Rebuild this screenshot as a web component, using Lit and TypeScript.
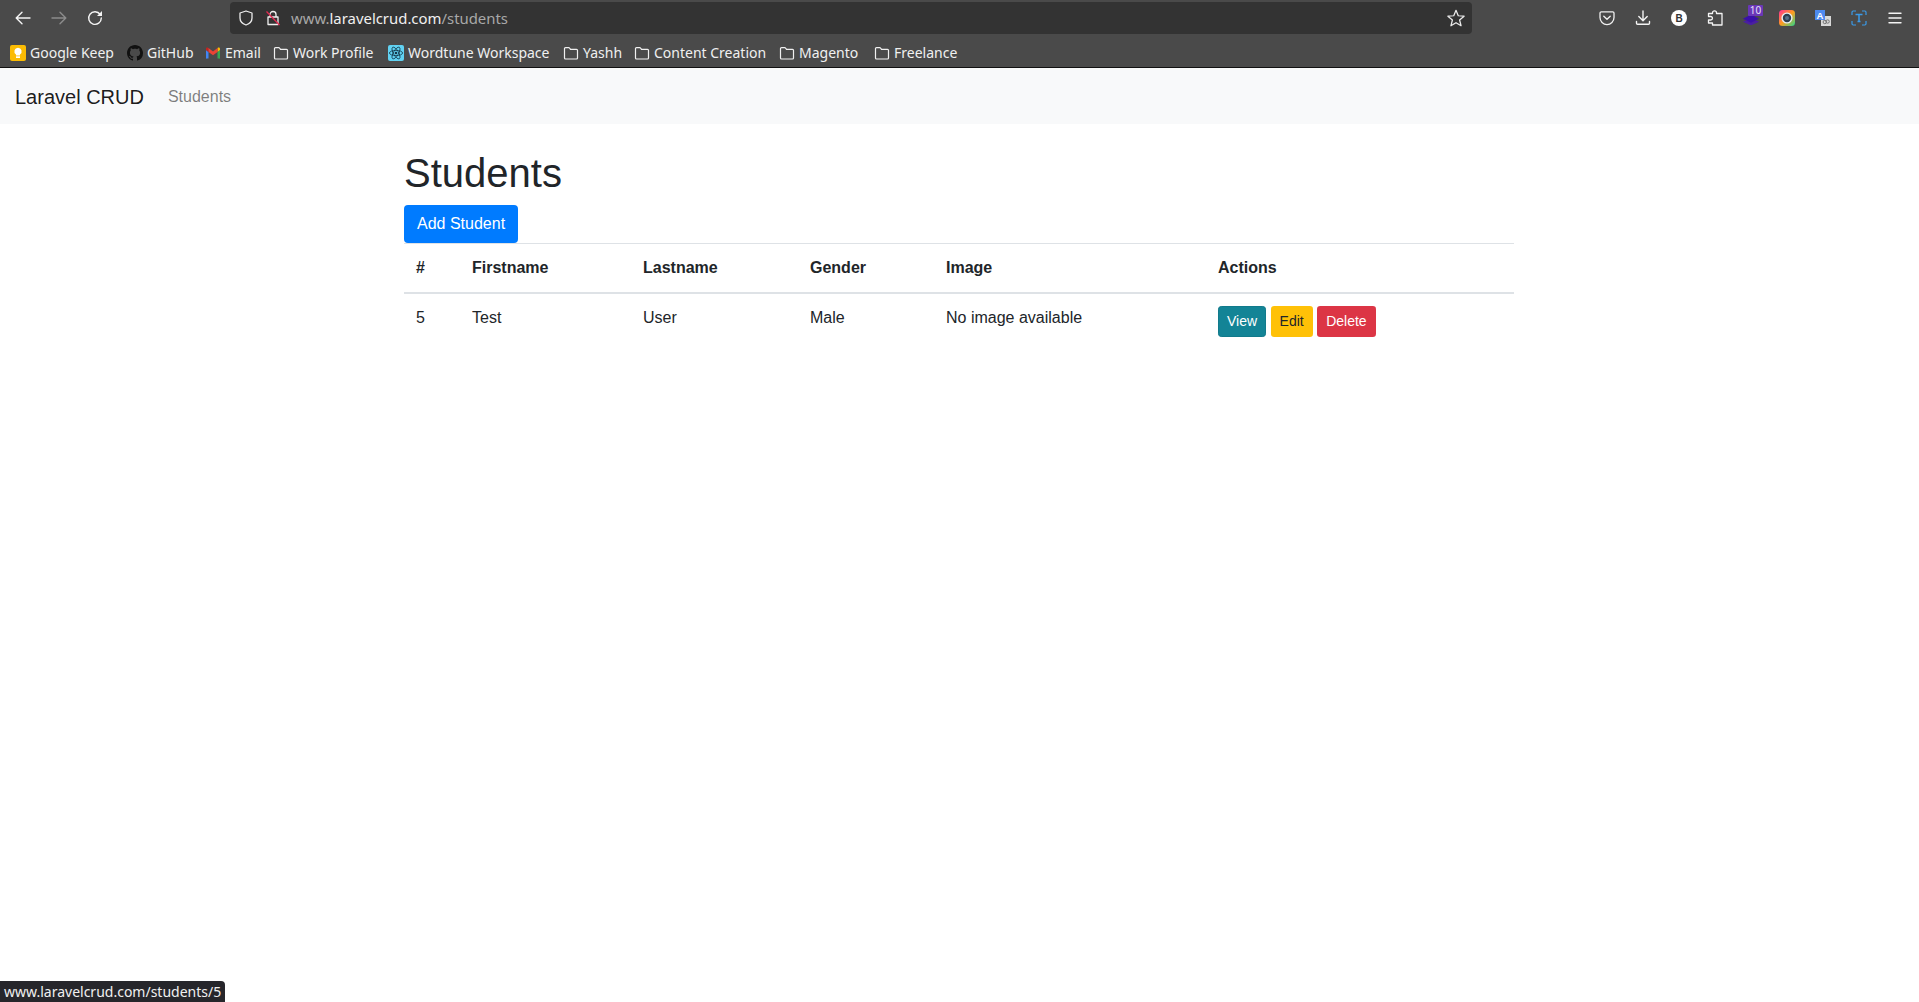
import { LitElement, css, html, svg } from 'lit';
import { customElement, state } from 'lit/decorators.js';

const folder = svg`<path d="M1.500 13V3.600c0-.6.4-1 1-1h3.200c.4 0 .7.2.9.5l.9 1.200h6c.6 0 1 .4 1 1V13c0 .6-.4 1-1 1h-11c-.6 0-1-.4-1-1z" fill="none" stroke="#f0f0f0" stroke-width="1.200"/>`;

const keep = svg`<rect width="16" height="16" rx="2" fill="#fbbc04"/><path d="M8 2.800a3.600 3.600 0 0 0-2 6.600v1.200h4V9.400a3.600 3.600 0 0 0-2-6.600z" fill="#fff"/><rect x="6" y="11.300" width="4" height="1.700" fill="#fff"/>`;

const github = svg`<path fill="#111" d="M8 0C3.58 0 0 3.58 0 8c0 3.54 2.29 6.53 5.47 7.59.4.07.55-.17.55-.38 0-.19-.01-.82-.01-1.49-2.01.37-2.53-.49-2.69-.94-.09-.23-.48-.94-.82-1.13-.28-.15-.68-.52-.01-.53.63-.01 1.08.58 1.23.82.72 1.21 1.87.87 2.33.66.07-.52.28-.87.51-1.07-1.78-.2-3.64-.89-3.64-3.95 0-.87.31-1.59.82-2.15-.08-.2-.36-1.02.08-2.12 0 0 .67-.21 2.2.82.64-.18 1.32-.27 2-.27.68 0 1.36.09 2 .27 1.53-1.04 2.2-.82 2.2-.82.44 1.1.16 1.92.08 2.12.51.56.82 1.27.82 2.15 0 3.07-1.87 3.75-3.65 3.95.29.25.54.73.54 1.48 0 1.07-.01 1.93-.01 2.2 0 .21.15.46.55.38A8.013 8.013 0 0016 8c0-4.42-3.58-8-8-8z"/>`;

const gmail = svg`<path d="M1 13.500V5l2.500 1.900v6.600H2a1 1 0 0 1-1-0z" fill="#4285f4"/><path d="M15 13.500V5l-2.500 1.900v6.600H14a1 1 0 0 0 1-0z" fill="#34a853"/><path d="M3.500 6.900 1 5V3.800c0-1.100 1.300-1.700 2.100-1l.4.300z" fill="#c5221f"/><path d="M12.500 6.900 15 5V3.800c0-1.100-1.300-1.700-2.100-1l-.4.300z" fill="#fbbc04"/><path d="M3.500 6.900V3.100L8 6.500l4.500-3.400v3.800L8 10.300z" fill="#ea4335"/>`;

const wordtune = svg`<rect width="16" height="16" rx="2" fill="#61d2f2"/><g fill="none" stroke="#14384a" stroke-width=".8"><ellipse cx="8" cy="8" rx="6.600" ry="2.600"/><ellipse cx="8" cy="8" rx="6.600" ry="2.600" transform="rotate(60 8 8)"/><ellipse cx="8" cy="8" rx="6.600" ry="2.600" transform="rotate(120 8 8)"/></g><circle cx="8" cy="8" r="1.300" fill="#14384a"/>`;

interface Bookmark {
  label: string;
  icon: unknown;
  width: number;
}

const bookmarks: Bookmark[] = [
  { label: 'Google Keep', icon: keep, width: 117 },
  { label: 'GitHub', icon: github, width: 78 },
  { label: 'Email', icon: gmail, width: 68 },
  { label: 'Work Profile', icon: folder, width: 115 },
  { label: 'Wordtune Workspace', icon: wordtune, width: 175 },
  { label: 'Yashh', icon: folder, width: 71 },
  { label: 'Content Creation', icon: folder, width: 145 },
  { label: 'Magento', icon: folder, width: 95 },
  { label: 'Freelance', icon: folder, width: 95 },
];

const columns = ['#', 'Firstname', 'Lastname', 'Gender', 'Image', 'Actions'];

@customElement('app-root')
export class AppRoot extends LitElement {
  @state()
  students = [{ id: 5, firstname: 'Test', lastname: 'User', gender: 'Male', image: 'No image available' }];

  static override styles = css`
    :host {
      display: block;
      position: relative;
      min-height: 100vh;
      overflow: hidden;
      background: #fff;
      color: #212529;
      font-family: 'Liberation Sans', Arial, sans-serif;
      font-size: 16px;
      line-height: 1.5;
    }

    .chrome {
      background: #4a4a4a;
      border-bottom: 1px solid #111;
      color: #f0f0f0;
      font-family: 'Noto Sans', sans-serif;
    }

    .toolbar {
      display: flex;
      align-items: center;
      height: 36px;
      padding: 0 6px 0 5px;
      box-sizing: border-box;
    }

    .slot {
      position: relative;
      flex: none;
      display: flex;
      align-items: center;
      justify-content: center;
      width: 36px;
      height: 36px;
    }

    .slot svg {
      display: block;
    }

    .nav-icons {
      display: flex;
      margin-right: 117px;
    }

    .urlbar {
      flex: 1;
      display: flex;
      align-items: center;
      height: 32px;
      margin-right: 117px;
      padding: 0 7px 0 8px;
      box-sizing: border-box;
      background: #333;
      border-radius: 4px;
      font-size: 14.9px;
      color: #a8a8a8;
    }

    .urlbar .shield {
      margin-right: 11px;
    }

    .urlbar .lock {
      margin-right: 10px;
    }

    .urlbar .star {
      margin-left: auto;
    }

    .url {
      flex: none;
    }

    .url b {
      font-weight: 400;
      color: #f0f0f0;
    }

    .badge {
      position: absolute;
      top: 5px;
      left: 15px;
      width: 15px;
      height: 11px;
      background: #6a37b8;
      border-radius: 1px;
      color: #e8e0f8;
      font-size: 10px;
      line-height: 11px;
      text-align: center;
    }

    .bookmarks {
      display: flex;
      align-items: center;
      height: 31px;
      padding: 2px 0 0 10px;
      box-sizing: border-box;
      font-size: 14px;
      white-space: nowrap;
    }

    .bookmark {
      flex: none;
      display: flex;
      align-items: center;
      gap: 4px;
    }

    .bookmark svg {
      flex: none;
    }

    .navbar {
      display: flex;
      align-items: center;
      height: 56px;
      padding: 1px 15px 0;
      box-sizing: border-box;
      background: #f8f9fa;
    }

    .brand {
      margin-right: 16px;
      font-size: 20px;
      color: rgba(0, 0, 0, 0.9);
    }

    .nav-link {
      padding: 8px;
      color: rgba(0, 0, 0, 0.5);
    }

    .container {
      width: 1110px;
      margin: 25px 0 0 404px;
    }

    h1 {
      margin: 0 0 8px;
      font-size: 40px;
      font-weight: 500;
      line-height: 48px;
    }

    .btn {
      display: inline-block;
      padding: 6px 12px;
      border: 1px solid transparent;
      border-radius: 4px;
      font-size: 16px;
      line-height: 24px;
      vertical-align: middle;
    }

    .btn-sm {
      padding: 4px 8px;
      border-radius: 3.2px;
      font-size: 14px;
      line-height: 21px;
    }

    .primary {
      background: #007bff;
      color: #fff;
    }

    .info {
      background: #138496;
      border-color: #117a8b;
      color: #fff;
    }

    .warning {
      background: #ffc107;
      color: #212529;
    }

    .danger {
      background: #dc3545;
      color: #fff;
    }

    table {
      width: 100%;
      border-collapse: collapse;
      table-layout: fixed;
    }

    th,
    td {
      box-sizing: border-box;
      padding: 12px;
      text-align: left;
      vertical-align: top;
    }

    th {
      border-top: 1px solid #dee2e6;
      border-bottom: 2px solid #dee2e6;
      font-weight: 700;
    }

    .col-0 { width: 56px; }
    .col-1 { width: 171px; }
    .col-2 { width: 167px; }
    .col-3 { width: 136px; }
    .col-4 { width: 272px; }

    .status {
      position: absolute;
      left: 0;
      bottom: 0;
      padding: 0 4px;
      height: 21px;
      background: #26262b;
      border-top-right-radius: 4px;
      color: #f0f0f0;
      font-family: 'Noto Sans', sans-serif;
      font-size: 14px;
      line-height: 21px;
    }
  `;

  override render() {
    return html`
      <div class="chrome">
        <div class="toolbar">
          <div class="nav-icons">
            <div class="slot">
              <svg width="16" height="16" viewBox="0 0 16 16"><path d="M15 8H1.500M7 2.200 1.200 8 7 13.800" fill="none" stroke="#f4f4f4" stroke-width="1.400" stroke-linecap="round" stroke-linejoin="round"/></svg>
            </div>
            <div class="slot">
              <svg width="16" height="16" viewBox="0 0 16 16"><path d="M1 8h13.500M9 2.200 14.800 8 9 13.800" fill="none" stroke="#8c8c8c" stroke-width="1.400" stroke-linecap="round" stroke-linejoin="round"/></svg>
            </div>
            <div class="slot">
              <svg width="16" height="16" viewBox="0 0 16 16"><path d="M13.200 4.500A6.300 6.300 0 1 0 14.300 8" fill="none" stroke="#f4f4f4" stroke-width="1.400" stroke-linecap="round"/><path d="M15 1v5h-5z" fill="#f4f4f4"/></svg>
            </div>
          </div>
          <div class="urlbar">
            <svg class="shield" width="16" height="16" viewBox="0 0 16 16"><path d="M8 1 14 3v5c0 3.500-2.500 5.800-6 7-3.500-1.200-6-3.500-6-7V3z" fill="none" stroke="#ececec" stroke-width="1.300" stroke-linejoin="round"/></svg>
            <svg class="lock" width="16" height="16" viewBox="0 0 16 16"><path d="M5 7V4.500a3 3 0 0 1 6 0V7M3 7h10v7.500H3z" fill="none" stroke="#f0f0f0" stroke-width="1.300" stroke-linejoin="round"/><path d="M1.500 1.500 14.500 15" stroke="#e22850" stroke-width="1.300"/></svg>
            <span class="url">www.<b>laravelcrud.com</b>/students</span>
            <svg class="star" width="18" height="18" viewBox="0 0 16 16"><path d="M8 1.200 10 6l5.200.4-4 3.400 1.300 5.100L8 12.200l-4.500 2.700 1.300-5.100-4-3.400L6 6z" fill="none" stroke="#ececec" stroke-width="1.100" stroke-linejoin="round"/></svg>
          </div>
          <div class="slot">
            <svg width="16" height="16" viewBox="0 0 16 16"><path d="M2.300 1.800h11.400c.7 0 1.300.6 1.300 1.300v4.500a7 7 0 0 1-14 0V3.100c0-.7.600-1.300 1.300-1.300z" fill="none" stroke="#f0f0f0" stroke-width="1.300"/><path d="M4.800 6.200 8 9.300l3.200-3.100" fill="none" stroke="#f0f0f0" stroke-width="1.400" stroke-linecap="round" stroke-linejoin="round"/></svg>
          </div>
          <div class="slot">
            <svg width="16" height="16" viewBox="0 0 16 16"><path d="M8 1v9.500M3.800 6.500 8 10.700l4.200-4.200M1.500 11.500v1.800c0 .6.400 1 1 1h11c.6 0 1-.4 1-1v-1.800" fill="none" stroke="#f4f4f4" stroke-width="1.400" stroke-linecap="round" stroke-linejoin="round"/></svg>
          </div>
          <div class="slot">
            <svg width="16" height="16" viewBox="0 0 16 16"><circle cx="8" cy="8" r="8" fill="#fff"/><text x="8" y="11.500" text-anchor="middle" font-family="Liberation Sans" font-size="10" font-weight="700" fill="#333">B</text></svg>
          </div>
          <div class="slot">
            <svg width="16" height="16" viewBox="0 0 16 16"><path d="M1 10h2.200a1.500 1.500 0 0 0 0-3.500H1V3.500h4V2.800a2 2 0 0 1 4 0v.7h5.500V15H5v-2H1z" fill="none" stroke="#f4f4f4" stroke-width="1.300" stroke-linejoin="round" transform="translate(.5 0)"/></svg>
          </div>
          <div class="slot">
            <svg width="18" height="14.400" viewBox="0 0 20 16"><path d="M10 8 19 12 10 16 1 12z" fill="#4a1fa0"/><path d="M10 4 19 8.500 10 13 1 8.500z" fill="#3a10a8"/></svg>
            <span class="badge">10</span>
          </div>
          <div class="slot">
            <svg width="16" height="16" viewBox="0 0 16 16">
              <defs><linearGradient id="ring" x1="0" y1="0" x2="1" y2="1"><stop offset="0" stop-color="#ff2d9b"/><stop offset=".5" stop-color="#ff9d1e"/><stop offset="1" stop-color="#27d88c"/></linearGradient></defs>
              <rect width="16" height="16" rx="3.500" fill="url(#ring)"/>
              <circle cx="8" cy="8" r="5.600" fill="#e8eef4"/><circle cx="8" cy="8" r="4.200" fill="#2c3e50"/><circle cx="8" cy="8" r="2" fill="#56708a"/>
            </svg>
          </div>
          <div class="slot">
            <svg width="16" height="16" viewBox="0 0 16 16"><rect x="6" y="6" width="10" height="10" fill="#d8d8d8"/><circle cx="9.800" cy="12" r="1.700" fill="none" stroke="#777" stroke-width="1"/><circle cx="12.600" cy="11.500" r="1.700" fill="none" stroke="#777" stroke-width="1"/><rect width="10" height="10" fill="#4d8af0"/><text x="5" y="8.500" text-anchor="middle" font-family="Liberation Sans" font-size="9.500" font-weight="700" fill="#fff">A</text></svg>
          </div>
          <div class="slot">
            <svg width="16" height="16" viewBox="0 0 16 16"><path d="M1 5V2.200C1 1.500 1.500 1 2.200 1H5M11 1h2.800c.7 0 1.200.5 1.200 1.200V5M15 11v2.800c0 .7-.5 1.200-1.200 1.200H11M5 15H2.200C1.500 15 1 14.500 1 13.800V11" fill="none" stroke="#3a9bea" stroke-width="1.200"/><path d="M4.500 4.500h7M8 4.500v7M6.500 11.500h3" fill="none" stroke="#3a9bea" stroke-width="1.500"/></svg>
          </div>
          <div class="slot">
            <svg width="16" height="16" viewBox="0 0 16 16"><path d="M2 3.200h12M2 8h12M2 12.800h12" stroke="#f4f4f4" stroke-width="1.400" stroke-linecap="round"/></svg>
          </div>
        </div>
        <div class="bookmarks">
          ${bookmarks.map(
            (b) => html`
              <div class="bookmark" style="width:${b.width}px">
                <svg width="16" height="16" viewBox="0 0 16 16">${b.icon}</svg>
                <span>${b.label}</span>
              </div>
            `
          )}
        </div>
      </div>
      <nav class="navbar">
        <span class="brand">Laravel CRUD</span>
        <span class="nav-link">Students</span>
      </nav>
      <main class="container">
        <h1>Students</h1>
        <span class="btn primary">Add Student</span>
        <table>
          <thead>
            <tr>
              ${columns.map((c, i) => html`<th class="col-${i}">${c}</th>`)}
            </tr>
          </thead>
          <tbody>
            ${this.students.map(
              (s) => html`
                <tr>
                  <td>${s.id}</td>
                  <td>${s.firstname}</td>
                  <td>${s.lastname}</td>
                  <td>${s.gender}</td>
                  <td>${s.image}</td>
                  <td>
                    <span class="btn btn-sm info">View</span>
                    <span class="btn btn-sm warning">Edit</span>
                    <span class="btn btn-sm danger">Delete</span>
                  </td>
                </tr>
              `
            )}
          </tbody>
        </table>
      </main>
      <div class="status">www.laravelcrud.com/students/5</div>
    `;
  }
}
